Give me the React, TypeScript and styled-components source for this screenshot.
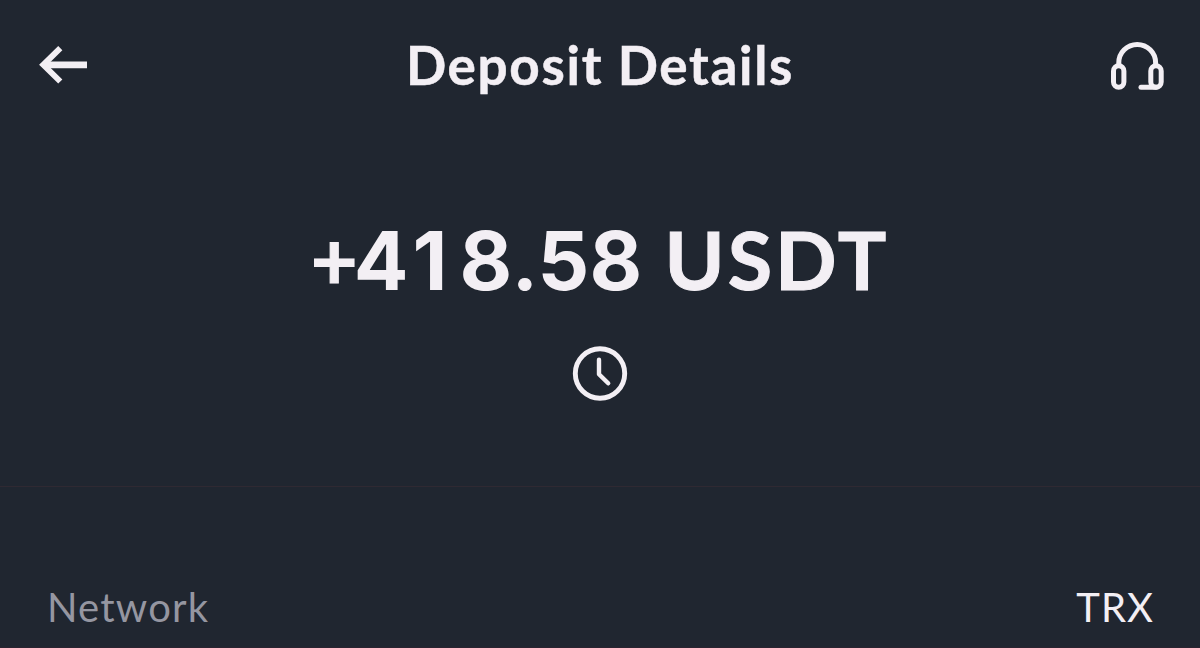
import React from 'react';
import styled, { createGlobalStyle } from 'styled-components';

const GlobalStyle = createGlobalStyle`
  * {
    box-sizing: border-box;
  }
  body {
    margin: 0;
    background: #202630;
  }
`;

export default function App() {
  return (
    <Screen>
      <GlobalStyle />
      <Header>
        <IconButton aria-label="Back"><BackIcon /></IconButton>
        <Title>Deposit Details</Title>
        <IconButton aria-label="Support"><HeadsetIcon /></IconButton>
      </Header>
      <Summary>
        <Amount>
          <span>
            <Part $spacing={-4}>+</Part>
            <Digits $spacing={4}>4</Digits>
            <Digits $spacing={12}>1</Digits>
            <Digits $spacing={3}>8</Digits>
            <Part $spacing={3}>.</Part>
            <Digits $spacing={0.3}>58</Digits>
          </span>
          <Part $spacing={3}>USDT</Part>
        </Amount>
        <ClockIcon />
      </Summary>
      <DetailRow>
        <Label>Network</Label>
        <Value>TRX</Value>
      </DetailRow>
    </Screen>
  );
}

const BackIcon: React.FC = () => (
  <svg width="50" height="42" viewBox="0 0 50 42" fill="none" stroke="#f3eff4">
    <path d="M22.3 4.2L5.3 20.8L22.3 37.5" strokeWidth="5.9" />
    <path d="M8 20.8H49" strokeWidth="6.8" />
  </svg>
);

const HeadsetIcon: React.FC = () => (
  <svg width="54" height="50" viewBox="0 0 54 50" fill="none" stroke="#f3eff4" strokeWidth="5">
    <path d="M8.8 24V22.8a18.4 18.4 0 0 1 36.8 0V24" />
    <rect x="3.5" y="25.8" width="10.4" height="21.4" rx="5.2" />
    <rect x="40.8" y="25.8" width="10.4" height="21.4" rx="5.2" />
    <path d="M31 47.2H46" strokeLinecap="round" />
  </svg>
);

const ClockIcon: React.FC = () => (
  <svg width="56" height="56" viewBox="0 0 56 56" fill="none" stroke="#f3eff4" strokeLinecap="round" strokeLinejoin="round">
    <circle cx="28" cy="28.5" r="24.7" strokeWidth="4.9" />
    <path d="M27 14.7V29.3L36.2 38.3" strokeWidth="4.4" />
  </svg>
);

const Screen = styled.div`
  display: flex;
  flex-direction: column;
  width: 1200px;
  height: 648px;
  overflow: hidden;
  background: #202630;
  border-bottom: 1px solid #2a2430;
  color: #f3eff4;
  font-family: Lato, 'Liberation Sans', sans-serif;
`;

const Header = styled.header`
  display: flex;
  align-items: center;
  justify-content: space-between;
  height: 130px;
  padding: 0 36px 0 38px;
`;

const IconButton = styled.button`
  display: flex;
  padding: 0;
  border: none;
  background: none;
`;

const Title = styled.h1`
  margin: 0 0 0 2px;
  font-size: 53px;
  font-weight: 700;
  line-height: 64px;
  letter-spacing: 1.7px;
  white-space: nowrap;
  -webkit-text-stroke: 0.5px;
`;

const Summary = styled.section`
  display: flex;
  flex-direction: column;
  align-items: center;
  height: 357px;
  padding-top: 79px;
  border-bottom: 1px solid #2f2932;
`;

const Amount = styled.div`
  display: flex;
  gap: 22px;
  height: 100px;
  margin-bottom: 36px;
  font-size: 81px;
  font-weight: 700;
  line-height: 100px;
  white-space: nowrap;
`;

const Part = styled.span<{ $spacing: number }>`
  letter-spacing: ${p => p.$spacing}px;
  -webkit-text-stroke: 1px;
`;

// Inter draws the 1 without a foot
const Digits = styled.span<{ $spacing: number }>`
  font-family: Inter, sans-serif;
  line-height: 1;
  letter-spacing: ${p => p.$spacing}px;
`;

const DetailRow = styled.div`
  display: flex;
  justify-content: space-between;
  padding: 96px 47px 0 47px;
  font-size: 40px;
  line-height: 48px;
`;

const Label = styled.span`
  color: #9596a1;
  letter-spacing: 1.2px;
`;

const Value = styled.span`
  color: #f3eff4;
  margin-right: -1px;
  letter-spacing: 1px;
`;
